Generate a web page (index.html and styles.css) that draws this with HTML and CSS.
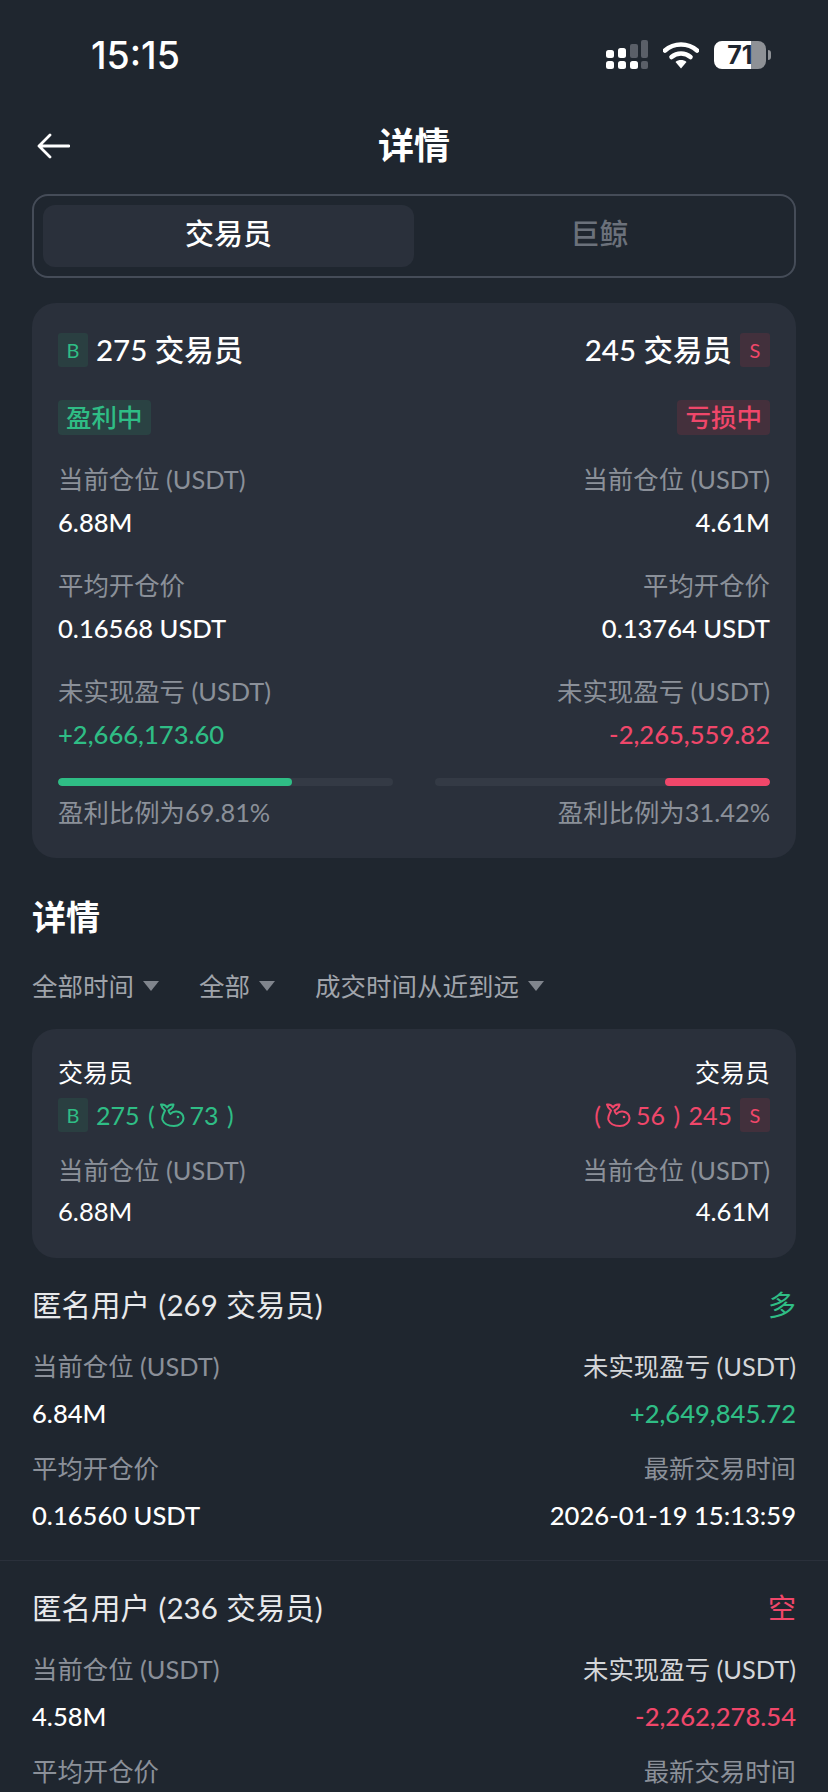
FILE: index.html
```html
<!DOCTYPE html>
<html lang="zh-CN">
<head>
    <meta charset="UTF-8">
    <meta name="viewport" content="width=device-width, initial-scale=1.0">
    <title>详情</title>
    <link rel="stylesheet" href="styles.css">
</head>
<body>
    <!-- 状态栏 -->
    <div class="status-bar">
        <div class="clock">15:15</div>
        <div class="status-icons">
            <svg class="signal" width="42" height="30" viewBox="0 0 42 30">
                <g fill="#fff">
                    <rect x="0" y="10" width="8" height="8" rx="2.5"/>
                    <rect x="12" y="8" width="8" height="10" rx="2.5"/>
                    <rect x="0" y="21" width="8" height="8" rx="2.5"/>
                    <rect x="12" y="21" width="8" height="8" rx="2.5"/>
                    <rect x="24" y="21" width="8" height="8" rx="2.5"/>
                </g>
                <g fill="#5a5f68">
                    <rect x="24" y="4" width="8" height="14" rx="2"/>
                    <rect x="35" y="0" width="7" height="18" rx="2"/>
                    <rect x="35" y="21" width="7" height="8" rx="2"/>
                </g>
            </svg>
            <svg class="wifi" width="36" height="28" viewBox="0 0 36 28">
                <path d="M2 9.5C11 1.5 25 1.5 34 9.5" fill="none" stroke="#fff" stroke-width="4.6" stroke-linecap="round"/>
                <path d="M8.5 16c5.5-4.6 13.500-4.600 19 0" fill="none" stroke="#fff" stroke-width="4.6" stroke-linecap="round"/>
                <path d="M12.500 21c3-2.600 8-2.600 11 0L18 27.500z" fill="#fff"/>
            </svg>
            <div class="battery">
                <div class="battery-body"><span class="battery-level">71</span></div>
                <div class="battery-tip"></div>
            </div>
        </div>
    </div>

    <!-- 标题栏 -->
    <div class="nav-bar">
        <svg class="back" width="33" height="26" viewBox="0 0 33 26">
            <path d="M32 13H2M13 2L2 13l11 11" fill="none" stroke="#fff" stroke-width="2.800" stroke-linecap="round" stroke-linejoin="round"/>
        </svg>
        <div class="nav-title">详情</div>
    </div>

    <div class="tabs">
        <div class="tab tab-active">交易员</div>
        <div class="tab">巨鲸</div>
    </div>

    <!-- 汇总卡片 -->
    <div class="card summary">
        <div class="row head-row">
            <div class="side-head">
                <span class="badge badge-buy">B</span>
                <span class="head-text">275 交易员</span>
            </div>
            <div class="side-head">
                <span class="head-text">245 交易员</span>
                <span class="badge badge-sell">S</span>
            </div>
        </div>
        <div class="row pill-row">
            <span class="pill pill-buy">盈利中</span>
            <span class="pill pill-sell">亏损中</span>
        </div>
        <div class="row stat-row">
            <div class="stat">
                <div class="label">当前仓位 (USDT)</div>
                <div class="value">6.88M</div>
            </div>
            <div class="stat right">
                <div class="label">当前仓位 (USDT)</div>
                <div class="value">4.61M</div>
            </div>
        </div>
        <div class="row stat-row">
            <div class="stat">
                <div class="label">平均开仓价</div>
                <div class="value">0.16568 USDT</div>
            </div>
            <div class="stat right">
                <div class="label">平均开仓价</div>
                <div class="value">0.13764 USDT</div>
            </div>
        </div>
        <div class="row stat-row">
            <div class="stat">
                <div class="label">未实现盈亏 (USDT)</div>
                <div class="value green">+2,666,173.60</div>
            </div>
            <div class="stat right">
                <div class="label">未实现盈亏 (USDT)</div>
                <div class="value red">-2,265,559.82</div>
            </div>
        </div>
        <div class="bars">
            <div class="bar-col">
                <div class="bar"><div class="bar-fill fill-buy" style="width: 69.81%"></div></div>
                <div class="label bar-label">盈利比例为69.81%</div>
            </div>
            <div class="bar-col right">
                <div class="bar bar-end"><div class="bar-fill fill-sell" style="width: 31.42%"></div></div>
                <div class="label bar-label">盈利比例为31.42%</div>
            </div>
        </div>
    </div>

    <h2 class="section-title">详情</h2>

    <div class="filters">
        <div class="filter">全部时间<span class="caret"></span></div>
        <div class="filter">全部<span class="caret"></span></div>
        <div class="filter">成交时间从近到远<span class="caret"></span></div>
    </div>

    <!-- 交易员卡片 -->
    <div class="card traders">
        <div class="row">
            <div class="trader-name">交易员</div>
            <div class="trader-name">交易员</div>
        </div>
        <div class="row count-row">
            <div class="count green">
                <span class="badge badge-buy">B</span>
                <span>275 (</span>
                <svg class="whale" width="25" height="25" viewBox="0 0 25 25"><use href="#whale"/></svg>
                <span>73 )</span>
            </div>
            <div class="count red">
                <span>(</span>
                <svg class="whale" width="25" height="25" viewBox="0 0 25 25"><use href="#whale"/></svg>
                <span>56 ) 245</span>
                <span class="badge badge-sell">S</span>
            </div>
        </div>
        <div class="row stat-row compact">
            <div class="stat">
                <div class="label">当前仓位 (USDT)</div>
                <div class="value thin">6.88M</div>
            </div>
            <div class="stat right">
                <div class="label">当前仓位 (USDT)</div>
                <div class="value thin">4.61M</div>
            </div>
        </div>
    </div>

    <!-- 列表 -->
    <div class="entry">
        <div class="row entry-head">
            <div class="entry-title">匿名用户 (269 交易员)</div>
            <div class="entry-side green">多</div>
        </div>
        <div class="row entry-label">
            <div class="label">当前仓位 (USDT)</div>
            <div class="label light">未实现盈亏 (USDT)</div>
        </div>
        <div class="row entry-value">
            <div class="value">6.84M</div>
            <div class="value green">+2,649,845.72</div>
        </div>
        <div class="row entry-label">
            <div class="label">平均开仓价</div>
            <div class="label">最新交易时间</div>
        </div>
        <div class="row entry-value">
            <div class="value">0.16560 USDT</div>
            <div class="value">2026-01-19 15:13:59</div>
        </div>
    </div>
    <div class="entry entry-next">
        <div class="row entry-head">
            <div class="entry-title">匿名用户 (236 交易员)</div>
            <div class="entry-side red">空</div>
        </div>
        <div class="row entry-label">
            <div class="label">当前仓位 (USDT)</div>
            <div class="label light">未实现盈亏 (USDT)</div>
        </div>
        <div class="row entry-value">
            <div class="value">4.58M</div>
            <div class="value red">-2,262,278.54</div>
        </div>
        <div class="row entry-label">
            <div class="label">平均开仓价</div>
            <div class="label">最新交易时间</div>
        </div>
    </div>

    <svg width="0" height="0" class="defs">
        <symbol id="whale" viewBox="0 0 25 25">
            <path d="M1 1.500C4 1 6 2.500 7 4.500 8 2.500 10 1 13.500 1.500 13 4.500 11 6.500 8.500 7.500 9 9.500 9.500 10.500 10.500 11 12 9 14 8 17 8.500 21 9 23.500 12 23.500 15 23.500 19.500 19 23 14 23 9 23 4 21 2.500 17 1.500 13.500 3.500 11 5 7.500 3 6 1.500 4 1 1.500z" fill="none" stroke="currentColor" stroke-width="2" stroke-linejoin="round"/>
            <circle cx="18" cy="14" r="1.300" fill="currentColor"/>
        </symbol>
    </svg>
</body>
</html>
```

FILE: styles.css
```css
* {
    box-sizing: border-box;
}
html, body {
    height: 1792px;
    overflow: hidden;
}
body {
    margin: 0;
    padding: 0 32px;
    background-color: #1f262f;
    color: #ffffff;
    font-family: Lato, "Noto Sans CJK SC", sans-serif;
}
.defs {
    position: absolute;
}
.status-bar {
    display: flex;
    justify-content: space-between;
    align-items: center;
    height: 56px;
    margin-top: 27px;
    padding: 0 25px 0 59px;
}
.clock {
    font-family: Inter, sans-serif;
    font-size: 37.5px;
    font-weight: 500;
}
.status-icons {
    display: flex;
    align-items: center;
    gap: 15px;
}
.battery {
    display: flex;
    align-items: center;
    gap: 2px;
}
.battery-body {
    width: 52px;
    height: 28px;
    border-radius: 8px;
    background: linear-gradient(to right, #ffffff 71%, #8e9196 71%);
    color: #1f262f;
    font-family: Inter, sans-serif;
    font-size: 25px;
    font-weight: 700;
    line-height: 28px;
    text-align: center;
}
.battery-tip {
    width: 3px;
    height: 10px;
    border-radius: 0 3px 3px 0;
    background-color: #8e9196;
}
.nav-bar {
    position: relative;
    height: 56px;
    margin-top: 34px;
    display: flex;
    justify-content: center;
    align-items: center;
}
.back {
    position: absolute;
    left: 5px;
    top: 16px;
}
.nav-title {
    font-size: 36px;
    font-weight: 700;
    line-height: 56px;
}
.tabs {
    display: flex;
    height: 84px;
    margin-top: 21px;
    padding: 9px;
    border: 2px solid #454c58;
    border-radius: 16px;
}
.tab {
    flex: 1;
    display: flex;
    justify-content: center;
    align-items: center;
    padding-bottom: 8px;
    border-radius: 12px;
    color: #6b717b;
    font-size: 29px;
    font-weight: 500;
}
.tab-active {
    background-color: #2a303b;
    color: #ffffff;
}
.card {
    background-color: #2a303b;
    border-radius: 24px;
    padding: 0 26px;
}
.row {
    display: flex;
    justify-content: space-between;
    align-items: center;
}
.summary {
    height: 555px;
    margin-top: 25px;
    padding-top: 24px;
}
.side-head {
    display: flex;
    align-items: center;
    gap: 8px;
}
.head-text {
    font-size: 29.5px;
    font-weight: 500;
}
.head-row .badge {
    margin-top: 3px;
}
.badge {
    display: inline-flex;
    justify-content: center;
    align-items: center;
    width: 30px;
    height: 34px;
    border-radius: 3px;
    font-size: 20px;
}
.badge-buy {
    background-color: #2a3f41;
    color: #2fbd85;
}
.badge-sell {
    background-color: #42303c;
    color: #f0476a;
}
.pill-row {
    margin-top: 31px;
}
.pill {
    height: 35px;
    padding: 0 8px;
    border-radius: 4px;
    font-size: 25.5px;
    font-weight: 500;
    line-height: 35px;
}
.pill-buy {
    background-color: #2a4243;
    color: #2fbd85;
}
.pill-sell {
    background-color: #44303c;
    color: #f0476a;
}
.stat-row {
    margin-top: 28px;
}
.pill-row + .stat-row {
    margin-top: 26px;
}
.stat {
    display: flex;
    flex-direction: column;
    gap: 8px;
}
.right {
    align-items: flex-end;
}
.label {
    color: #8b9099;
    font-size: 25.4px;
    line-height: 36px;
}
.light {
    color: #d5d7da;
}
.value {
    font-size: 25.6px;
    font-weight: 500;
    line-height: 34px;
}
.thin {
    font-weight: 400;
}
.green {
    color: #2fbd85;
}
.red {
    color: #f0476a;
}
.bars {
    display: flex;
    justify-content: space-between;
    margin-top: 27px;
}
.bar-col {
    display: flex;
    flex-direction: column;
    width: 335px;
}
.bar {
    align-self: stretch;
    height: 8px;
    border-radius: 4px;
    background-color: #343a45;
    overflow: hidden;
}
.bar-fill {
    height: 8px;
    border-radius: 4px;
}
.bar-end {
    display: flex;
    justify-content: flex-end;
}
.fill-buy {
    background-color: #2fbd85;
}
.fill-sell {
    background-color: #f0476a;
}
.bar-label {
    margin-top: 8px;
}
.section-title {
    margin: 32px 0 0;
    font-size: 34px;
    font-weight: 700;
    line-height: 54px;
}
.filters {
    display: flex;
    gap: 40px;
    margin-top: 24px;
}
.filter {
    display: flex;
    align-items: center;
    gap: 9px;
    color: #a0a4ab;
    font-size: 25.5px;
    line-height: 36px;
}
.caret {
    width: 0;
    height: 0;
    border-left: 8px solid transparent;
    border-right: 8px solid transparent;
    border-top: 10px solid #80858d;
}
.traders {
    height: 229px;
    margin-top: 25px;
    padding-top: 25px;
}
.trader-name {
    font-size: 25px;
    line-height: 36px;
}
.count-row {
    margin-top: 8px;
}
.count {
    display: flex;
    align-items: center;
    gap: 5px;
    font-size: 25px;
    word-spacing: 2px;
}
.count .badge-buy {
    margin-right: 3px;
}
.count .badge-sell {
    margin-left: 3px;
}
.compact {
    margin-top: 20px;
}
.compact .stat {
    gap: 6px;
}
.entry {
    padding-top: 29px;
    padding-bottom: 28px;
}
.entry-head {
    line-height: 36px;
}
.entry-title {
    font-size: 29.5px;
    word-spacing: 1px;
    color: #e8e9eb;
}
.entry-side {
    font-size: 28px;
}
.entry-label {
    margin-top: 20px;
}
.entry-head + .entry-label {
    margin-top: 25px;
}
.entry-value {
    margin-top: 12px;
}
.entry-next {
    border-top: 1px solid #2a303b;
    margin: 0 -32px;
    padding: 29px 32px 0;
}
```
